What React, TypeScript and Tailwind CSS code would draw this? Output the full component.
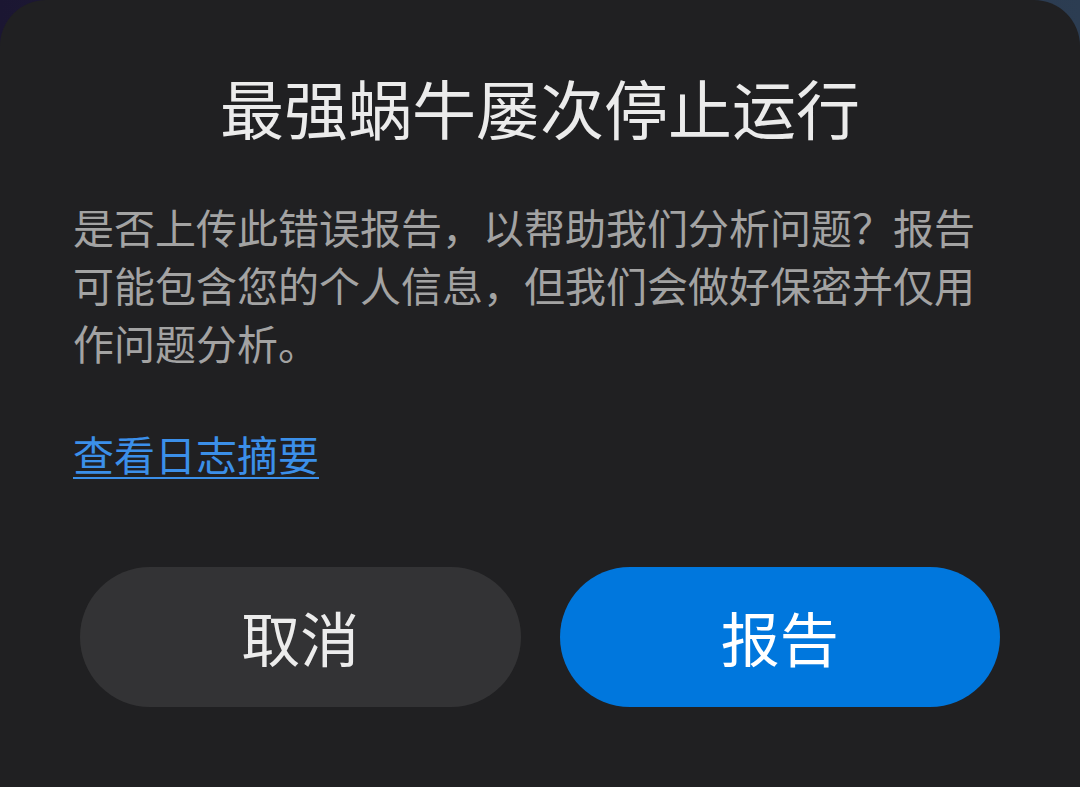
import React from "react";

function App() {
  return (
    <div
      className="w-[1080px] h-[787px] overflow-hidden bg-gradient-to-r from-[#1b1632] to-[#2c3d52]"
      style={{ fontFamily: '"Noto Sans CJK SC", "Noto Sans", sans-serif' }}
    >
      <div className="h-full bg-[#202022] rounded-t-[46px] flex flex-col">
        {/* Title */}
        <div className="mt-[66px] h-[80px] leading-[80px] text-center text-[64px] font-normal text-[#ebebeb]">
          最强蜗牛屡次停止运行
        </div>

        {/* Message */}
        <p className="mt-[51px] px-[73px] text-[41px] leading-[58px] text-[#a3a3a3]">
          是否上传此错误报告，以帮助我们分析问题？报告可能包含您的个人信息，但我们会做好保密并仅用作问题分析。
        </p>

        <div className="mt-[53px] px-[73px]">
          <a
            href="#"
            className="text-[41px] leading-[58px] text-[#3b8fe9] underline underline-offset-[6px] decoration-2"
          >
            查看日志摘要
          </a>
        </div>

        {/* Buttons */}
        <div className="mt-[85px] px-[80px] flex gap-[39px]">
          <button className="flex-1 h-[140px] rounded-full bg-[#333335] text-[59px] font-normal text-[#ececec]">
            取消
          </button>
          <button className="flex-1 h-[140px] rounded-full bg-[#0077dd] text-[59px] font-normal text-white">
            报告
          </button>
        </div>
      </div>
    </div>
  );
}

export default App;
